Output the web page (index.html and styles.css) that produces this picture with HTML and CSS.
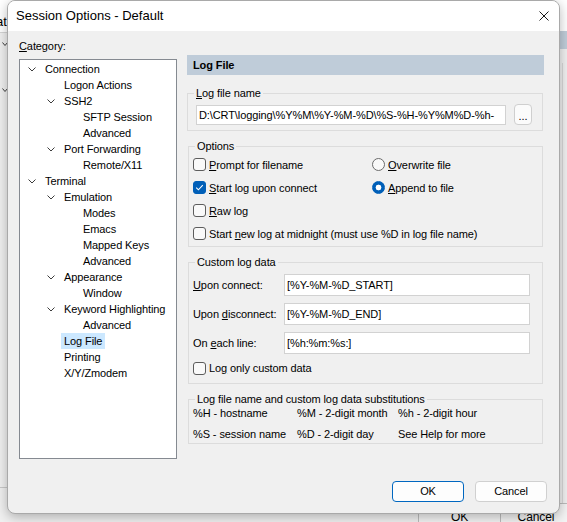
FILE: index.html
```html
<!DOCTYPE html>
<html>
<head>
<meta charset="utf-8">
<title>Session Options - Default</title>
<link rel="stylesheet" href="styles.css">
</head>
<body>
<div class="desk">
  <div class="parent">
    <div class="parent-top"><span class="parent-title">at</span></div>
    <div class="parent-band"></div>
    <div class="parent-vline"></div>
    <div class="parent-hline"></div>
    <svg class="parent-chev chev-a" width="6" height="5" viewBox="0 0 6 5"><polyline points="0.5,0.5 3,3.5 5.5,0.5" fill="none" stroke="#404040" stroke-width="1"/></svg>
    <svg class="parent-chev chev-b" width="6" height="5" viewBox="0 0 6 5"><polyline points="0.5,0.5 3,3.5 5.5,0.5" fill="none" stroke="#404040" stroke-width="1"/></svg>
    <div class="parent-btn pb-ok">OK</div>
    <div class="parent-btn pb-cancel">Cancel</div>
  </div>

  <div class="dialog">
    <div class="titlebar">
      <span class="title">Session Options - Default</span>
      <svg class="close" width="10" height="10" viewBox="0 0 10 10"><path d="M0.5 0.5 L9.5 9.5 M9.5 0.5 L0.5 9.5" stroke="#1a1a1a" stroke-width="1" fill="none"/></svg>
    </div>
    <div class="body">
      <div class="main">
        <div class="left">
          <div class="cat-label"><u>C</u>ategory:</div>
          <div class="tree">
            <ul class="lvl">
              <li><div class="row"><span class="tog"><svg width="8" height="5" viewBox="0 0 8 5"><polyline points="0.5,0.5 4,4 7.5,0.5"/></svg></span><span class="lbl">Connection</span></div>
                <ul class="lvl sub">
                  <li><div class="row"><span class="tog"></span><span class="lbl">Logon Actions</span></div></li>
                  <li><div class="row"><span class="tog"><svg width="8" height="5" viewBox="0 0 8 5"><polyline points="0.5,0.5 4,4 7.5,0.5"/></svg></span><span class="lbl">SSH2</span></div>
                    <ul class="lvl sub">
                      <li><div class="row"><span class="tog"></span><span class="lbl">SFTP Session</span></div></li>
                      <li><div class="row"><span class="tog"></span><span class="lbl">Advanced</span></div></li>
                    </ul>
                  </li>
                  <li><div class="row"><span class="tog"><svg width="8" height="5" viewBox="0 0 8 5"><polyline points="0.5,0.5 4,4 7.5,0.5"/></svg></span><span class="lbl">Port Forwarding</span></div>
                    <ul class="lvl sub">
                      <li><div class="row"><span class="tog"></span><span class="lbl">Remote/X11</span></div></li>
                    </ul>
                  </li>
                </ul>
              </li>
              <li><div class="row"><span class="tog"><svg width="8" height="5" viewBox="0 0 8 5"><polyline points="0.5,0.5 4,4 7.5,0.5"/></svg></span><span class="lbl">Terminal</span></div>
                <ul class="lvl sub">
                  <li><div class="row"><span class="tog"><svg width="8" height="5" viewBox="0 0 8 5"><polyline points="0.5,0.5 4,4 7.5,0.5"/></svg></span><span class="lbl">Emulation</span></div>
                    <ul class="lvl sub">
                      <li><div class="row"><span class="tog"></span><span class="lbl">Modes</span></div></li>
                      <li><div class="row"><span class="tog"></span><span class="lbl">Emacs</span></div></li>
                      <li><div class="row"><span class="tog"></span><span class="lbl">Mapped Keys</span></div></li>
                      <li><div class="row"><span class="tog"></span><span class="lbl">Advanced</span></div></li>
                    </ul>
                  </li>
                  <li><div class="row"><span class="tog"><svg width="8" height="5" viewBox="0 0 8 5"><polyline points="0.5,0.5 4,4 7.5,0.5"/></svg></span><span class="lbl">Appearance</span></div>
                    <ul class="lvl sub">
                      <li><div class="row"><span class="tog"></span><span class="lbl">Window</span></div></li>
                    </ul>
                  </li>
                  <li><div class="row"><span class="tog"><svg width="8" height="5" viewBox="0 0 8 5"><polyline points="0.5,0.5 4,4 7.5,0.5"/></svg></span><span class="lbl">Keyword Highlighting</span></div>
                    <ul class="lvl sub">
                      <li><div class="row"><span class="tog"></span><span class="lbl">Advanced</span></div></li>
                    </ul>
                  </li>
                  <li><div class="row"><span class="tog"></span><span class="lbl selected">Log File</span></div></li>
                  <li><div class="row"><span class="tog"></span><span class="lbl">Printing</span></div></li>
                  <li><div class="row"><span class="tog"></span><span class="lbl">X/Y/Zmodem</span></div></li>
                </ul>
              </li>
            </ul>
          </div>
        </div>

        <div class="right">
          <div class="panel-head">Log File</div>

          <fieldset class="group g-name">
            <legend><u>L</u>og file name</legend>
            <div class="name-row">
              <input class="edit name-edit" type="text" value="D:\CRT\logging\%Y%M\%Y-%M-%D\%S-%H-%Y%M%D-%h-">
              <span class="dots-btn">...</span>
            </div>
          </fieldset>

          <fieldset class="group g-opts">
            <legend>Options</legend>
            <div class="opts-grid">
              <div class="opt"><span class="box"></span><span><u>P</u>rompt for filename</span></div>
              <div class="opt"><span class="radio"></span><span><u>O</u>verwrite file</span></div>
              <div class="opt"><span class="box checked"><svg width="13" height="13" viewBox="0 0 13 13"><polyline points="3.2,6.6 5.4,8.8 9.8,4.2" fill="none" stroke="#fff" stroke-width="1.1"/></svg></span><span><u>S</u>tart log upon connect</span></div>
              <div class="opt"><span class="radio on"></span><span><u>A</u>ppend to file</span></div>
              <div class="opt span2"><span class="box"></span><span><u>R</u>aw log</span></div>
              <div class="opt span2"><span class="box"></span><span>Start <u>n</u>ew log at midnight (must use %D in log file name)</span></div>
            </div>
          </fieldset>

          <fieldset class="group g-custom">
            <legend>Custom log data</legend>
            <div class="custom-grid">
              <span class="clabel"><u>U</u>pon connect:</span>
              <input class="edit" type="text" value="[%Y-%M-%D_START]">
              <span class="clabel">Upon <u>d</u>isconnect:</span>
              <input class="edit" type="text" value="[%Y-%M-%D_END]">
              <span class="clabel">On <u>e</u>ach line:</span>
              <input class="edit" type="text" value="[%h:%m:%s:]">
            </div>
            <div class="opt custom-only"><span class="box"></span><span>Lo<u>g</u> only custom data</span></div>
          </fieldset>

          <fieldset class="group g-subs">
            <legend>Log file name and custom log data substitutions</legend>
            <div class="subs-grid">
              <span>%H - hostname</span>
              <span>%M - 2-digit month</span>
              <span>%h - 2-digit hour</span>
              <span>%S - session name</span>
              <span>%D - 2-digit day</span>
              <span>See Help for more</span>
            </div>
          </fieldset>
        </div>
      </div>

      <div class="buttons">
        <span class="btn default">OK</span>
        <span class="btn">Cancel</span>
      </div>
    </div>
  </div>
</div>
</body>
</html>
```

FILE: styles.css
```css
* {
  box-sizing: border-box;
}

html,
body {
  margin: 0;
  padding: 0;
}

body {
  width: 567px;
  height: 522px;
  overflow: hidden;
  background: #f0f0f0;
  font-family: "Liberation Sans", Arial, sans-serif;
  font-size: 11px;
  letter-spacing: -0.1px;
  color: #000;
}

.desk {
  position: relative;
  width: 567px;
  height: 522px;
  overflow: hidden;
}

/* ---------- underlying parent window ---------- */
.parent {
  position: absolute;
  inset: 0;
  background: #f0f0f0;
}

.parent-top {
  height: 33px;
  background: #ffffff;
  border-bottom: 1px solid #d5d5d5;
}

.parent-title {
  position: absolute;
  left: -4px;
  top: 14px;
  font-size: 13px;
  letter-spacing: 0;
  line-height: 16px;
}

.parent-band {
  position: absolute;
  left: 480px;
  right: 0;
  top: 31px;
  height: 18px;
  background: #c0cdd9;
}

.parent-vline {
  position: absolute;
  left: 562px;
  top: 63px;
  bottom: 0;
  border-left: 1px solid #d8d8d8;
}

.parent-hline {
  position: absolute;
  left: 0;
  width: 20px;
  top: 487px;
  border-top: 1px solid #c8c8c8;
}

.parent-chev {
  position: absolute;
  left: 2px;
}

.chev-a {
  top: 42px;
}

.chev-b {
  top: 88px;
}

.parent-btn {
  position: absolute;
  top: 503px;
  height: 26px;
  line-height: 26px;
  text-align: center;
  font-size: 12px;
  border: 1px solid #bcbcbc;
  background: #f3f3f3;
}

.pb-ok {
  left: 418px;
  width: 83px;
}

.pb-cancel {
  left: 500px;
  width: 72px;
}

/* ---------- dialog ---------- */
.dialog {
  position: absolute;
  left: 7px;
  top: 0;
  width: 553px;
  height: 514px;
  background: #f0f0f0;
  border: 1px solid #a9a9a9;
  border-radius: 8px;
  box-shadow: 0 3px 12px rgba(0, 0, 0, 0.28);
  overflow: hidden;
  display: flex;
  flex-direction: column;
}

.titlebar {
  height: 30px;
  flex: none;
  background: #ffffff;
  display: flex;
  justify-content: space-between;
  align-items: flex-start;
  padding: 0 9px 0 8px;
}

.title {
  font-size: 13px;
  letter-spacing: 0;
  line-height: 30px;
}

.close {
  margin-top: 10px;
  margin-right: 1px;
}

.body {
  flex: 1;
  display: flex;
  flex-direction: column;
  padding: 8px 12px 10px 11px;
}

.main {
  display: grid;
  grid-template-columns: 158px 357px;
  column-gap: 10px;
}

.cat-label {
  line-height: 14px;
  height: 14px;
  margin-bottom: 6px;
}

/* ---------- tree ---------- */
.tree {
  height: 400px;
  background: #ffffff;
  border: 1px solid #858a91;
  padding: 1px 0 0 6px;
}

.lvl {
  list-style: none;
  margin: 0;
  padding: 0;
}

.lvl.sub {
  padding-left: 19px;
}

.row {
  display: flex;
  align-items: center;
  height: 16px;
  white-space: nowrap;
}

.tog {
  width: 19px;
  flex: none;
  display: flex;
  align-items: center;
  padding-left: 2px;
}

.tog svg polyline {
  fill: none;
  stroke: #3c3c3c;
  stroke-width: 1;
}

.lbl {
  line-height: 16px;
}

.lbl.selected {
  background: #cce8ff;
  padding: 0 3px;
  margin-left: -3px;
}

/* ---------- right panel ---------- */
.right {
  margin-top: 16px;
}

.panel-head {
  height: 20px;
  line-height: 20px;
  background: #bfccd9;
  font-weight: bold;
  padding-left: 6px;
}

.group {
  margin: 8px 1px 0 1px;
  border: 1px solid #dcdcdc;
  min-width: 0;
}

.group legend {
  padding: 0 2px;
  line-height: 14px;
}

.g-name {
  margin-top: 11px;
  margin-left: 0;
  padding: 4px 10px 5px 8px;
}

.g-name legend {
  margin-left: -2px;
}

.name-row {
  display: flex;
  align-items: flex-end;
  gap: 8px;
}

.edit {
  font-family: "Liberation Sans", Arial, sans-serif;
  font-size: 11px;
  letter-spacing: -0.1px;
  color: #000;
  background: #ffffff;
  border: 1px solid #d2d2d2;
  border-radius: 0;
  padding: 0 2px;
  margin: 0;
  outline: none;
  height: 22px;
  width: 100%;
}

.name-edit {
  width: 310px;
  height: 20px;
  flex: none;
}

.dots-btn {
  width: 18px;
  height: 21px;
  flex: none;
  border: 1px solid #cfcfcf;
  border-radius: 4px;
  background: #fbfbfb;
  text-align: center;
  line-height: 23px;
  font-size: 11px;
}

.g-opts {
  padding: 0 4px 1px 4px;
}

.g-opts legend {
  margin-left: 2px;
}

.opts-grid {
  display: grid;
  grid-template-columns: 179px 1fr;
  grid-auto-rows: 23px;
}

.opt {
  display: flex;
  align-items: center;
  gap: 3px;
  white-space: nowrap;
}

.span2 {
  grid-column: 1 / 3;
}

.box {
  width: 13px;
  height: 13px;
  flex: none;
  border: 1px solid #5c5c5c;
  border-radius: 3px;
  background: #f9f9f9;
  position: relative;
}

.box.checked {
  background: #005fb8;
  border-color: #005fb8;
}

.box.checked svg {
  position: absolute;
  left: -1px;
  top: -1px;
}

.radio {
  width: 13px;
  height: 13px;
  flex: none;
  border: 1px solid #6b6b6b;
  border-radius: 50%;
  background: #f9f9f9;
}

.radio.on {
  background: radial-gradient(circle at center, #ffffff 0 2.6px, #005fb8 3.2px);
  border-color: #005fb8;
}

.g-custom {
  padding: 5px 12px 4px 4px;
}

.g-custom legend {
  margin-left: 2px;
}

.custom-grid {
  display: grid;
  grid-template-columns: 91px 1fr;
  grid-auto-rows: 22px;
  row-gap: 7px;
  align-items: center;
}

.custom-only {
  height: 22px;
  margin-top: 3px;
}

.g-subs {
  padding: 0 4px 2px 4px;
}

.g-subs legend {
  margin-left: 2px;
}

.subs-grid {
  display: grid;
  grid-template-columns: 104px 101px 1fr;
  grid-auto-rows: 14px;
  row-gap: 7px;
  line-height: 14px;
  white-space: nowrap;
}

/* ---------- buttons ---------- */
.buttons {
  margin-top: 22px;
  display: flex;
  justify-content: flex-end;
  gap: 11px;
}

.btn {
  width: 72px;
  height: 21px;
  line-height: 19px;
  text-align: center;
  border: 1px solid #d0d0d0;
  border-radius: 4px;
  background: #fdfdfd;
}

.btn.default {
  border-color: #0067c0;
}
```
